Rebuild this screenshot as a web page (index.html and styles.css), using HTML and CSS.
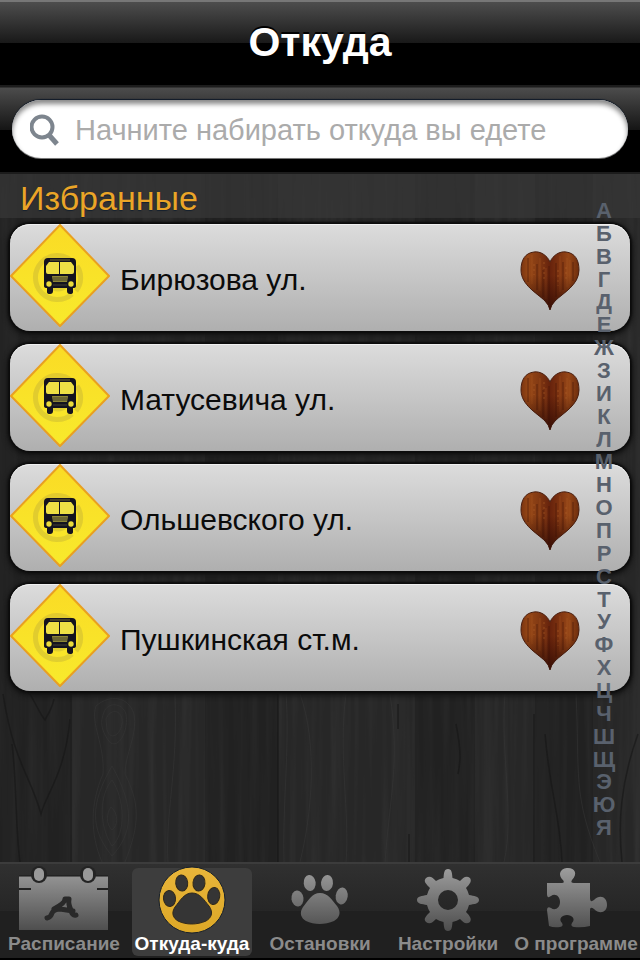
FILE: index.html
```
<!DOCTYPE html>
<html lang="ru">
<head>
<meta charset="utf-8">
<meta name="viewport" content="width=device-width, initial-scale=1">
<title>Откуда</title>
<link rel="stylesheet" href="styles.css">
</head>
<body>
<svg class="defs" aria-hidden="true">
  <defs>
    <linearGradient id="metal" gradientUnits="userSpaceOnUse" x1="0" y1="0" x2="0" y2="66">
      <stop offset="0" stop-color="#a0a0a0"/><stop offset="1" stop-color="#4c4c4c"/>
    </linearGradient>
    <linearGradient id="gold" x1="0" y1="0" x2="0" y2="1">
      <stop offset="0" stop-color="#e8b53a"/><stop offset="1" stop-color="#dda827"/>
    </linearGradient>
    <linearGradient id="sun" x1="0" y1="0" x2="0" y2="1">
      <stop offset="0" stop-color="#fadb25"/><stop offset="1" stop-color="#f8ea2c"/>
    </linearGradient>
    <linearGradient id="wood" x1="0" y1="0" x2="1" y2="0">
      <stop offset="0" stop-color="#7a3410"/><stop offset=".12" stop-color="#964716"/>
      <stop offset=".3" stop-color="#833a13"/><stop offset=".5" stop-color="#66220c"/>
      <stop offset=".65" stop-color="#7c3210"/><stop offset=".82" stop-color="#954617"/>
      <stop offset="1" stop-color="#6e2d0d"/>
    </linearGradient>
    <linearGradient id="shade" x1="0" y1="0" x2="0" y2="1">
      <stop offset=".4" stop-color="#2a0903" stop-opacity="0"/><stop offset="1" stop-color="#2a0903" stop-opacity=".75"/>
    </linearGradient>
    <filter id="grain" x="0" y="0" width="100%" height="100%">
      <feTurbulence type="fractalNoise" baseFrequency="0.12 0.004" numOctaves="3" seed="8"/>
      <feColorMatrix values="0 0 0 0 0.5  0 0 0 0 0.5  0 0 0 0 0.5  0.9 0 0 0 -0.32"/>
    </filter>
    <symbol id="bus" viewBox="0 0 100 104">
      <path d="M50 1 99 52 50 102 1 52Z" fill="url(#sun)" stroke="#e9a021" stroke-width="2" stroke-linejoin="round"/>
      <g fill="none" stroke="#b5a33a" stroke-opacity=".35" stroke-width="5">
        <path d="M62 70A22 22 0 1 1 62 37M67 42A21 21 0 0 1 66 67"/>
        <circle cx="48" cy="54" r="11"/>
      </g>
      <path d="M38 34H62Q66 34 66 38V62Q66 64 63 64V68Q63 70 60 70Q57 70 57 67V64H43V67Q43 70 40 70Q37 70 37 68V64Q34 64 34 62V38Q34 34 38 34Z" fill="#14131f"/>
      <path d="M39 38H49V50H38Q36 50 36 48V42ZM50 38H61L64 42V48Q64 50 62 50H50Z" fill="#eedf45"/>
      <path d="M40 36H60" stroke="#6f6930" stroke-width="1"/>
      <path d="M42 52H58L57 58H43Z" fill="#8e8634"/>
      <path d="M43 54H57M43 56H57M43 61H57" stroke="#474330" stroke-width="1"/>
      <circle cx="39" cy="60" r="2.7" fill="#eadb3c"/><circle cx="61" cy="60" r="2.7" fill="#eadb3c"/>
    </symbol>
    <symbol id="heart" viewBox="0 0 60 62">
      <path d="M30 12C27 5 20 1 14 2C5 3 1 10 1 20C1 35 17 43 25 51Q29 55 30 60Q31 55 35 51C43 43 59 35 59 20C59 10 55 3 46 2C40 1 33 5 30 12Z" fill="url(#wood)" stroke="#4b2112" stroke-width="1"/>
      <g fill="none" stroke-width="1">
        <path d="M8 8V32M17 14V40M23 20V47M29 16V54M36 13V47M43 12V40M53 12V31" stroke="#421506" stroke-opacity=".6"/>
        <path d="M12 5V34M20 8V41M26 18V49M40 6V42M47 8V37M50 10V34" stroke="#b5632a" stroke-opacity=".35"/>
        <path d="M14 14V25M24 12V29M38 20V36M46 17V29" stroke="#b5632a" stroke-opacity=".55" stroke-dasharray="2 3"/>
      </g>
      <path d="M30 12C27 5 20 1 14 2C5 3 1 10 1 20C1 35 17 43 25 51Q29 55 30 60Q31 55 35 51C43 43 59 35 59 20C59 10 55 3 46 2C40 1 33 5 30 12Z" fill="url(#shade)"/>
    </symbol>
    <symbol id="paw" viewBox="4 0 120 68">
      <ellipse cx="41.500" cy="32.500" rx="6" ry="8" transform="rotate(-6 41.500 32.500)"/>
      <ellipse cx="53.700" cy="17" rx="6" ry="8" transform="rotate(-6 53.700 17)"/>
      <ellipse cx="71" cy="17" rx="6" ry="8" transform="rotate(6 71 17)"/>
      <ellipse cx="85.700" cy="30" rx="6" ry="8.500" transform="rotate(8 85.700 30)"/>
      <path d="M64 27C72 27 76 34 81 40C86 47 83 52 78 55C69 59 58 59 50 55C45 52 43 47 47 41C52 35 56 27 64 27Z"/>
    </symbol>
  </defs>
</svg>

<div class="app">
  <header class="title-bar"><h1>Откуда</h1></header>

  <form class="search-bar" role="search">
    <label class="search-field">
      <svg class="search-icon" viewBox="0 0 30 32" aria-hidden="true">
        <circle cx="12" cy="13" r="10.500" fill="none" stroke="#7d858e" stroke-width="4"/>
        <path d="M19 21 27 30" stroke="#7d858e" stroke-width="5"/>
      </svg>
      <input type="search" aria-label="Откуда" placeholder="Начните набирать откуда вы едете">
    </label>
  </form>

  <main class="content">
    <svg class="planks" viewBox="0 0 640 688" preserveAspectRatio="none" aria-hidden="true">
      <rect width="640" height="688" filter="url(#grain)" opacity=".13"/>
      <g fill="#000" opacity=".14">
        <rect x="0" width="70" height="688"/><rect x="205" width="73" height="688"/><rect x="415" width="60" height="688"/><rect x="535" width="58" height="688"/>
      </g>
      <g fill="none" stroke="#161616" stroke-width="1.500" opacity=".6">
        <path d="M3 520C14 590 30 600 41 640C46 620 65 600 70 545M30 520C38 534 40 540 45 546C48 540 52 535 54 525M12 570C17 610 15 650 20 688M71 520V688"/>
        <path d="M278 520V688M398 530V555M409 660V688M456 550C462 580 460 590 458 600M534 540V688M545 560C550 620 560 640 562 688M638 560C620 610 618 650 622 688"/>
      </g>
      <g fill="none" stroke="#383838" stroke-width="1" opacity=".5">
        <path d="M96 532C110 520 128 522 134 540C138 560 125 580 125 600C140 630 140 650 125 688M96 532C90 550 105 570 103 600C90 630 90 660 102 688M106 545C110 535 120 535 122 545C124 556 112 570 107 556ZM112 606C125 625 126 660 112 672C98 650 100 620 112 606ZM111 633C119 640 118 652 112 656C106 650 106 640 111 633ZM112 592C136 635 132 660 112 682C90 655 90 630 112 592ZM104 538C108 528 122 528 126 540C129 560 116 578 108 566C101 555 100 548 104 538Z"/>
        <path d="M300 520C318 570 312 640 300 688M286 520C290 570 282 640 284 688M346 520C338 580 350 640 346 688M175 520C178 600 165 640 168 688M385 688C390 620 400 590 390 520M505 520C500 580 515 640 504 688M576 520C580 600 572 620 600 688"/>
      </g>
    </svg>

    <h2 class="section-title">Избранные</h2>
    <ul class="stops">
      <li class="stop"><a class="stop-link" href="#"><svg class="sign" aria-hidden="true"><use href="#bus"/></svg><span>Бирюзова ул.</span></a><button class="favorite" type="button" aria-label="Избранное"><svg aria-hidden="true"><use href="#heart"/></svg></button></li>
      <li class="stop"><a class="stop-link" href="#"><svg class="sign" aria-hidden="true"><use href="#bus"/></svg><span>Матусевича ул.</span></a><button class="favorite" type="button" aria-label="Избранное"><svg aria-hidden="true"><use href="#heart"/></svg></button></li>
      <li class="stop"><a class="stop-link" href="#"><svg class="sign" aria-hidden="true"><use href="#bus"/></svg><span>Ольшевского ул.</span></a><button class="favorite" type="button" aria-label="Избранное"><svg aria-hidden="true"><use href="#heart"/></svg></button></li>
      <li class="stop"><a class="stop-link" href="#"><svg class="sign" aria-hidden="true"><use href="#bus"/></svg><span>Пушкинская ст.м.</span></a><button class="favorite" type="button" aria-label="Избранное"><svg aria-hidden="true"><use href="#heart"/></svg></button></li>
    </ul>

    <nav class="index" aria-label="Алфавит">
      <a href="#">А</a><a href="#">Б</a><a href="#">В</a><a href="#">Г</a><a href="#">Д</a><a href="#">Е</a><a href="#">Ж</a><a href="#">З</a><a href="#">И</a><a href="#">К</a><a href="#">Л</a><a href="#">М</a><a href="#">Н</a><a href="#">О</a><a href="#">П</a><a href="#">Р</a><a href="#">С</a><a href="#">Т</a><a href="#">У</a><a href="#">Ф</a><a href="#">Х</a><a href="#">Ц</a><a href="#">Ч</a><a href="#">Ш</a><a href="#">Щ</a><a href="#">Э</a><a href="#">Ю</a><a href="#">Я</a>
    </nav>
  </main>

  <nav class="tabs">
    <button class="tab" type="button">
      <svg class="tab-icon" viewBox="4 0 120 68" aria-hidden="true">
        <path d="M19 10H108V64H19Z" fill="url(#metal)"/>
        <path d="M19 10H108" stroke="#191919" stroke-width="1"/>
        <path d="M19 23H31M97 23H108" stroke="#222" stroke-width="2"/>
        <g fill="#242424"><rect x="31" y="0" width="16" height="17" rx="8"/><rect x="80" y="0" width="16" height="17" rx="8"/></g>
        <g fill="#999"><rect x="34" y="2" width="10" height="13" rx="5"/><rect x="83" y="2" width="10" height="13" rx="5"/></g>
        <path d="M47 52Q51 51 52 47Q54 43 60 43L73 45M54 43Q65 37 65 33H69Q68 38 71 44Q72 50 76 49" fill="none" stroke="#292929" stroke-width="5" stroke-linecap="round" stroke-linejoin="round"/>
      </svg>
      <span>Расписание</span>
    </button>
    <button class="tab tab-active" type="button" aria-current="page">
      <svg class="tab-icon" viewBox="4 0 120 68" aria-hidden="true">
        <circle cx="64" cy="34" r="33" fill="url(#gold)" stroke="#17202b" stroke-width="1"/>
        <use href="#paw" x="4" y="0" width="120" height="68" fill="#353535" stroke="#30291c" stroke-width="1"/>
      </svg>
      <span>Откуда-куда</span>
    </button>
    <button class="tab" type="button">
      <svg class="tab-icon" viewBox="4 0 120 68" aria-hidden="true"><use href="#paw" x="4" y="0" width="120" height="68" fill="url(#metal)"/></svg>
      <span>Остановки</span>
    </button>
    <button class="tab" type="button">
      <svg class="tab-icon" viewBox="4 0 120 68" aria-hidden="true">
        <path fill="url(#metal)" fill-rule="evenodd" d="M59.500 12C60 7 60 3 64 3C68 3 68 7 68.500 12Q73 13 76 15C79 12 82 9 86 12C88 15 86 18 82 22Q84 25 85 29C90 30 95 30 95 34C95 38 90 38 85 39Q84 43 82 46C86 50 88 53 86 56C82 59 79 56 76 53Q73 55 68.500 56C68 61 68 65 64 65C60 65 60 61 59.500 56Q55 55 52 53C49 56 46 59 42 56C39 53 42 50 46 46Q44 43 43 39C38 38 33 38 33 34C33 30 38 30 43 29Q44 25 46 22C42 18 39 15 42 12C46 9 49 12 52 15Q55 13 59.500 12ZM64 24A10 10 0 1 0 64 44A10 10 0 1 0 64 24Z"/>
      </svg>
      <span>Настройки</span>
    </button>
    <button class="tab" type="button">
      <svg class="tab-icon" viewBox="4 0 120 68" aria-hidden="true">
        <path fill="url(#metal)" d="M35 17H50Q53 17 51 14C45 8 49 2 56 2C63 2 66 8 60 14Q58 17 62 17H78V32Q78 37 82 34C88 28 95 31 95 39C95 46 88 49 82 43Q78 40 78 44V60Q70 62 62 61Q58 60 60 57C64 53 60 49 55 49C50 49 46 53 50 57Q52 60 48 61Q42 62 37 60L35 44Q35 40 39 42C43 45 48 42 48 36C48 30 43 27 39 30Q35 33 35 28Z"/>
      </svg>
      <span>О программе</span>
    </button>
  </nav>
</div>
</body>
</html>
```
FILE: styles.css
```
* { box-sizing: border-box; }

body {
  margin: 0;
  background: #000;
  font-family: "Liberation Sans", Arial, sans-serif;
}

button { padding: 0; border: 0; background: none; font: inherit; cursor: pointer; }
a { color: inherit; text-decoration: none; }

.defs { position: absolute; width: 0; height: 0; }

.app { display: flex; flex-direction: column; min-height: 100vh; }

.title-bar {
  display: flex;
  align-items: center;
  justify-content: center;
  height: 87px;
  padding-bottom: 4px;
  border-top: 2px solid #777;
  border-bottom: 2px solid #1c1c1c;
  background: linear-gradient(#505050, #181818 50%, #000 50%) border-box;
}

.title-bar h1 {
  margin: 0;
  color: #fff;
  font-size: 41px;
  line-height: 48px;
  text-shadow: 0 -2px 0 #000;
}

.search-bar {
  height: 87px;
  padding: 12px 12px 0;
  border-top: 1px solid #333;
  border-bottom: 2px solid #1c1c1c;
  background: linear-gradient(#4c4c4c, #151515 50%, #000 50%);
}

.search-field {
  display: flex;
  align-items: center;
  gap: 15px;
  height: 58px;
  padding: 2px 18px 0;
  border-radius: 29px;
  background: #fff;
  box-shadow: inset 0 4px 5px #888, 0 -1px 1px #101a28, 0 1px 0 #777;
}

.search-icon { flex: none; width: 30px; height: 32px; }

.search-field input {
  flex: 1;
  min-width: 0;
  padding: 0;
  border: 0;
  outline: 0;
  background: none;
  color: #000;
  font: 29px/36px "Liberation Sans", Arial, sans-serif;
}

.search-field input::placeholder { color: #ababab; opacity: 1; }

.content { position: relative; z-index: 0; flex: 1; background: #272727; }

.planks { position: absolute; inset: 0; z-index: -1; width: 100%; height: 100%; }

.section-title {
  margin: 0;
  padding: 6px 20px 2px;
  background: rgba(56, 56, 56, .7);
  color: #eba527;
  font-size: 34px;
  font-weight: 400;
  line-height: 36px;
  text-shadow: 0 1px 1px #14202e;
}

.stops {
  display: grid;
  gap: 13px;
  margin: 0;
  padding: 6px 10px;
  list-style: none;
}

.stop {
  display: flex;
  align-items: center;
  height: 107px;
  padding: 0 50px 3px 0;
  border-radius: 20px;
  background: linear-gradient(#dcdcdc, #afafaf);
  box-shadow: 0 0 2px 2px #0c0c0c, 0 2px 5px 3px #151515, inset 0 1px 0 #f0f0f0;
}

.stop-link {
  display: flex;
  flex: 1;
  align-items: center;
  gap: 10px;
  color: #0b0b0b;
  font-size: 30px;
  line-height: 36px;
}

.stop-link span { padding-top: 8px; }

.sign { flex: none; width: 100px; height: 104px; }

.favorite { width: 60px; height: 62px; margin-top: 10px; }
.favorite svg { display: block; width: 100%; height: 100%; }

.index {
  position: absolute;
  inset: 26px 16px 22px auto;
  display: flex;
  flex-direction: column;
  width: 40px;
  color: #59616d;
  font-size: 22px;
  font-weight: 700;
  line-height: 22px;
  text-align: center;
}

.index a { flex: 1; }

.tabs {
  display: flex;
  height: 98px;
  padding-top: 4px;
  border-top: 2px solid #3c3c3c;
  border-bottom: 2px solid #000;
  background: linear-gradient(#303030, #262626 50%, #202020 50%);
}

.tab {
  display: flex;
  flex: 1;
  flex-direction: column;
  align-items: center;
  height: 88px;
  min-width: 0;
  margin: 0 4px;
  border-radius: 6px;
  color: #8b8b8b;
  font-size: 19px;
  font-weight: 700;
  line-height: 20px;
  white-space: nowrap;
}

.tab-active { background: #3d3d3d; color: #fff; }

.tab-icon { flex: none; width: 120px; height: 68px; max-width: 100%; margin-top: -2px; }
```
